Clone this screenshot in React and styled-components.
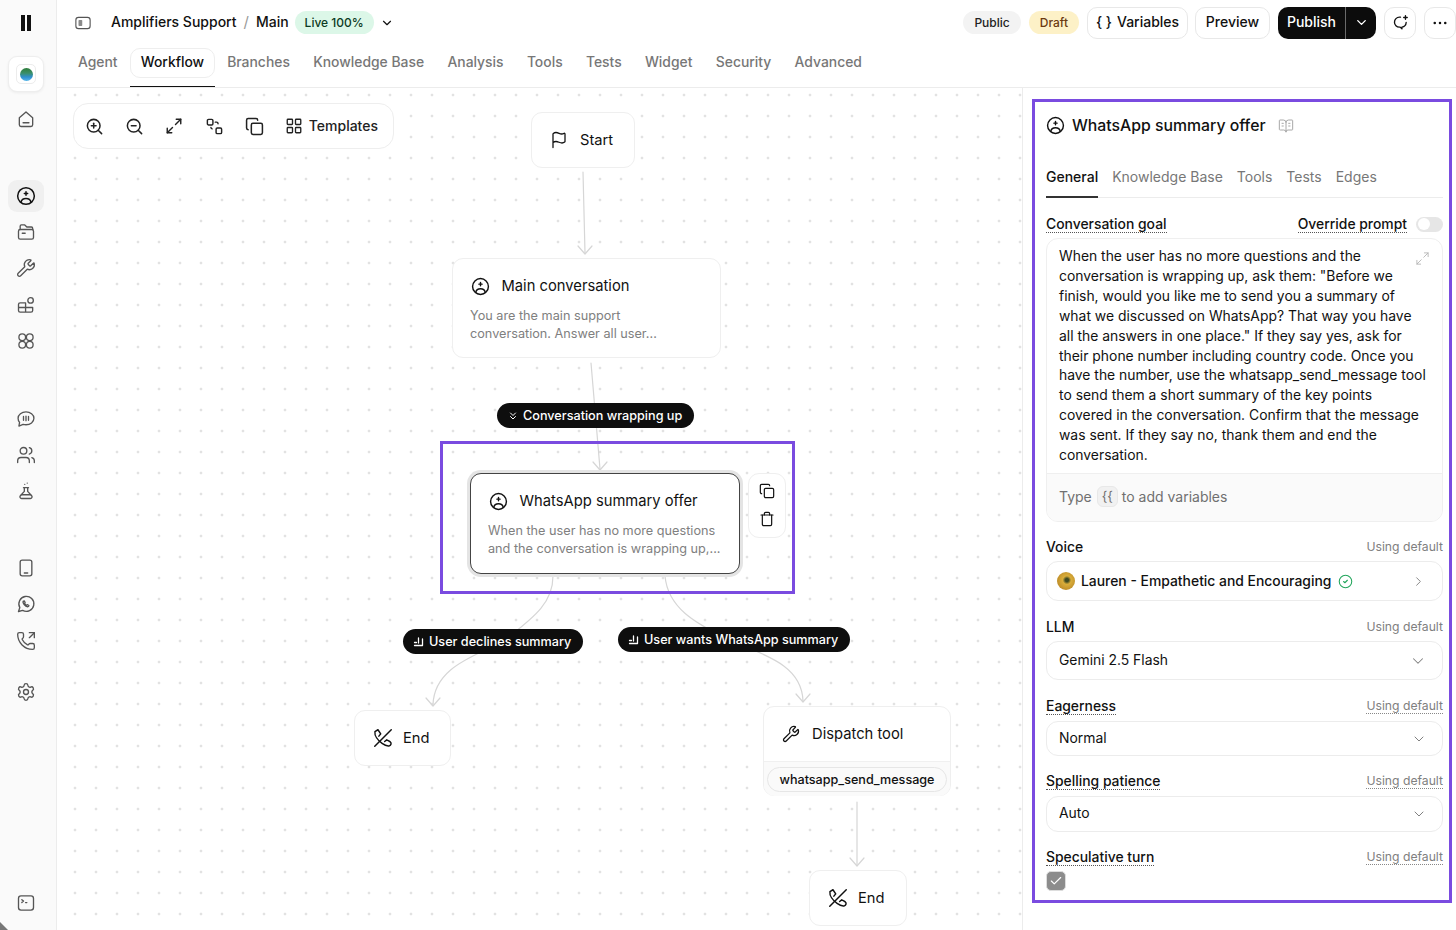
import React from 'react';
import styled, {createGlobalStyle} from 'styled-components';
import {
   ZoomIn, ZoomOut, Maximize2, Copy, LayoutGrid, Wrench, Flag, ChevronDown, ChevronRight, ChevronsDown,
   Settings, Users, PhoneOutgoing, Trash, BookOpenText, CircleCheck, Check
} from 'lucide-react';

const GlobalStyle = createGlobalStyle`
   html, body {
      margin: 0;
      padding: 0;
      background: #ffffff;
      overflow: hidden;
   }
   body {
      font-family: Inter, "Liberation Sans", sans-serif;
      color: #111111;
   }
`;

const Page = styled.div`
   display: flex;
   width: 1456px;
   height: 930px;
   overflow: hidden;
   position: relative;
`;

/* left rail */
const Rail = styled.nav`
   flex: 0 0 57px;
   box-sizing: border-box;
   background: #fafafa;
   border-right: 1px solid #ececec;
   display: flex;
   flex-direction: column;
   align-items: center;
   padding: 15px 4px 0 0;
`;

const Bars = styled.div`
   display: flex;
   gap: 1.5px;
   height: 16px;
   margin-bottom: 25px;
   span {
      width: 4.3px;
      background: #111111;
   }
`;

const LogoBox = styled.div`
   width: 36px;
   height: 36px;
   box-sizing: border-box;
   background: #ffffff;
   border: 1px solid #eeeeee;
   border-radius: 9px;
   box-shadow: 0 1px 3px rgba(0, 0, 0, 0.06);
   display: flex;
   align-items: center;
   justify-content: center;
`;

const LogoInner = styled.div`
   width: 20px;
   height: 20px;
   box-sizing: border-box;
   border: 1px solid #ececec;
   border-radius: 5px;
   display: flex;
   align-items: center;
   justify-content: center;
`;

const Orb = styled.div`
   width: 13px;
   height: 13px;
   border-radius: 50%;
   background: linear-gradient(180deg, #2f7d3a 0%, #3a8f6a 40%, #2f8fd0 70%, #57b6e8 100%);
`;

const RailGroup = styled.div`
   display: flex;
   flex-direction: column;
   gap: 4.2px;
   margin-top: ${p => p.$top}px;
`;

const RailItem = styled.div`
   width: 36px;
   height: 32px;
   border-radius: 9px;
   display: flex;
   align-items: center;
   justify-content: center;
   color: ${p => p.$active ? '#111111' : '#555555'};
   background: ${p => p.$active ? '#f0f0f0' : 'transparent'};
`;

const RailBottom = styled(RailGroup)`
   margin-top: auto;
   margin-bottom: 11px;
`;

const CornerMark = styled.svg`
   position: absolute;
   left: 0;
   bottom: 0;
`;

/* main column */
const Main = styled.div`
   flex: 1;
   min-width: 0;
   display: flex;
   flex-direction: column;
`;

const TopBar = styled.header`
   height: 45px;
   display: flex;
   align-items: center;
   padding-left: 17px;
   flex: none;
`;

const Crumb = styled.span`
   font-size: 14px;
   font-weight: 500;
   margin-left: ${p => p.$left || 0}px;
   margin-bottom: 2px;
`;

const CrumbSlash = styled.span`
   font-size: 15px;
   color: #9a9a9a;
   margin: 0 7px 2px 7px;
`;

const TopSpacer = styled.div`
   flex: 1;
`;

const Pill = styled.span`
   height: 23px;
   display: inline-flex;
   align-items: center;
   padding: 0 ${p => p.$pad || 11}px;
   border-radius: 12px;
   font-size: ${p => p.$size || 12}px;
   font-weight: 500;
   background: ${p => p.$bg};
   color: ${p => p.$fg};
   margin-left: ${p => p.$left || 0}px;
`;

const CaretBox = styled.span`
   display: flex;
   margin-left: 6px;
`;

const OutlineButton = styled.button`
   height: 32px;
   box-sizing: border-box;
   border: 1px solid #e8e8e8;
   border-radius: 10px;
   background: #ffffff;
   font-family: inherit;
   font-size: 14px;
   font-weight: 500;
   color: #111111;
   padding: 0 0 2px;
   margin-left: ${p => p.$left || 0}px;
   display: inline-flex;
   align-items: center;
   justify-content: center;
   white-space: nowrap;
   flex: none;
   width: ${p => p.$width}px;
`;

const IconButton = styled(OutlineButton)`
   padding: 0;
`;

const Braces = styled.span`
   margin-right: 5px;
`;

const PublishGroup = styled.div`
   display: flex;
   height: 32px;
   margin-left: 8px;
   border-radius: 10px;
   overflow: hidden;
   background: #0c0c0c;
   color: #ffffff;
   font-size: 14px;
   font-weight: 500;
   flex: none;
`;

const PublishLabel = styled.div`
   width: 68px;
   box-sizing: border-box;
   padding-bottom: 2px;
   display: flex;
   align-items: center;
   justify-content: center;
   border-right: 1px solid #6a6a6a;
`;

const PublishArrow = styled.div`
   width: 30px;
   display: flex;
   align-items: center;
   justify-content: center;
`;

const Tabs = styled.div`
   height: 43px;
   flex: none;
   box-sizing: border-box;
   display: flex;
   align-items: flex-start;
   gap: 23.3px;
   padding: 3px 0 0 21px;
   border-bottom: 1px solid #ececec;
`;

const Tab = styled.div`
   font-size: 13.9px;
   font-weight: 500;
   color: #777777;
   height: 30px;
   line-height: 29px;
`;

const ActiveTab = styled.div`
   position: relative;
   width: 85px;
   box-sizing: border-box;
   height: 30px;
   line-height: 27px;
   margin: 0 -11px 0 -11px;
   text-align: center;
   font-size: 13.9px;
   font-weight: 500;
   color: #111111;
   border: 1px solid #eeeeee;
   border-radius: 10px;
   &::after {
      content: "";
      position: absolute;
      left: -1px;
      right: -1px;
      bottom: -10px;
      height: 1.5px;
      background: #111111;
   }
`;

const Body = styled.div`
   flex: 1;
   min-height: 0;
   display: flex;
`;

/* flow canvas */
const Canvas = styled.section`
   position: relative;
   flex: 1;
   min-width: 0;
   background-color: #ffffff;
   background-image: radial-gradient(circle at center, #b8b8b8 0.8px, transparent 1.1px);
   background-size: 21px 21px;
   background-position: 7.5px -3.5px;
`;

const Edges = styled.svg`
   position: absolute;
   left: -57px;
   top: -88px;
   pointer-events: none;
`;

const Toolbar = styled.div`
   position: absolute;
   left: 16px;
   top: 15px;
   width: 321px;
   height: 46px;
   box-sizing: border-box;
   background: #ffffff;
   border: 1px solid #eeeeee;
   border-radius: 15px;
   display: flex;
   align-items: center;
   padding-left: 1px;
   color: #222222;
`;

const ToolIcon = styled.div`
   width: 39.8px;
   height: 40px;
   flex: none;
   display: flex;
   align-items: center;
   justify-content: center;
`;

const ToolLabel = styled.span`
   font-size: 14px;
   font-weight: 500;
   margin: 0 0 2px -5px;
`;

const Node = styled.div`
   position: absolute;
   left: ${p => p.$x}px;
   top: ${p => p.$y}px;
   width: ${p => p.$w}px;
   height: ${p => p.$h}px;
   box-sizing: border-box;
   background: #ffffff;
   border: 1px solid #efefef;
   border-radius: 11px;
`;

const SimpleNode = styled(Node)`
   display: flex;
   align-items: center;
   padding-left: ${p => p.$pad || 18}px;
   gap: ${p => p.$gap || 12}px;
   font-size: 14.7px;
`;

const CardNode = styled(Node)`
   padding: 17px 17px 0 17px;
`;

const SelectedNode = styled(CardNode)`
   border: 1.5px solid #444444;
   box-shadow: 0 0 0 3px #e4e4e4;
`;

const NodeTitle = styled.div`
   display: flex;
   align-items: center;
   gap: 11.5px;
   font-size: 14.75px;
   height: 20px;
   white-space: nowrap;
   padding-left: 1px;
`;

const Caption = styled.span`
   margin-bottom: 1px;
`;

const NodeText = styled.div`
   font-size: 12.7px;
   line-height: 17.5px;
   color: #808080;
   margin: 11px -8px 0 0;
   white-space: nowrap;
`;

const NodeActions = styled(Node)`
   display: flex;
   flex-direction: column;
   align-items: center;
   gap: 12px;
   padding-top: 9px;
`;

const ToolHead = styled.div`
   height: 54px;
   display: flex;
   align-items: center;
   gap: 12px;
   padding-left: 18px;
   font-size: 14.75px;
   border-bottom: 1px solid #f0f0f0;
`;

const ToolFoot = styled.div`
   height: 34px;
   box-sizing: border-box;
   padding: 5px 3px 0;
   background: #fafafa;
   border-radius: 0 0 11px 11px;
`;

const ToolChip = styled.div`
   height: 25px;
   box-sizing: border-box;
   border: 1px solid #e6e6e6;
   border-radius: 13px;
   background: #fafafa;
   text-align: center;
   font-size: 12.6px;
   font-weight: 500;
   line-height: 23px;
`;

const EdgeLabel = styled.div`
   position: absolute;
   left: ${p => p.$x}px;
   top: ${p => p.$y}px;
   height: 25px;
   box-sizing: border-box;
   display: flex;
   align-items: center;
   gap: 4px;
   padding: 0 11.5px 0 10px;
   border-radius: 13px;
   background: #0e0e0e;
   color: #ffffff;
   font-size: 12.65px;
   font-weight: 500;
   white-space: nowrap;
`;

const Highlight = styled.div`
   position: absolute;
   left: 383px;
   top: 353px;
   width: 355px;
   height: 153px;
   box-sizing: border-box;
   border: 3px solid #7a4be0;
   pointer-events: none;
`;

/* inspector */
const Inspector = styled.aside`
   flex: 0 0 434px;
   box-sizing: border-box;
   border-left: 1px solid #ececec;
   padding: 11px 4px 0 9px;
`;

const InspectorFrame = styled.div`
   height: 804px;
   box-sizing: border-box;
   border: 3px solid #7a4be0;
   padding: 0 6px 0 11px;
`;

const InspectorHead = styled.div`
   height: 47px;
   display: flex;
   align-items: center;
   gap: 7px;
   font-size: 15.8px;
   font-weight: 500;
`;

const HeadBook = styled.span`
   display: flex;
   color: #a8a8a8;
   margin-left: 5px;
`;

const SubTabs = styled.div`
   display: flex;
   gap: 14px;
   margin-top: 6px;
   height: 43px;
   box-sizing: border-box;
   border-bottom: 1px solid #ececec;
`;

const SubTab = styled.div`
   height: 43px;
   box-sizing: border-box;
   line-height: 44px;
   font-size: 14px;
   font-weight: ${p => p.$active ? 500 : 400};
   color: ${p => p.$active ? '#111111' : '#777777'};
   border-bottom: ${p => p.$active ? '2px solid #333333' : 'none'};
`;

const LabelRow = styled.div`
   display: flex;
   align-items: center;
   justify-content: space-between;
   height: 18px;
   margin-top: ${p => p.$top}px;
`;

const Label = styled.span`
   font-size: 13.9px;
   font-weight: 500;
   line-height: 16px;
   border-bottom: ${p => p.$dotted ? '1px dotted #555555' : '1px solid transparent'};
`;

const DefaultNote = styled.span`
   font-size: 12.2px;
   line-height: 15px;
   color: #808080;
   border-bottom: ${p => p.$dotted ? '1px dotted #888888' : '1px solid transparent'};
`;

const OverrideWrap = styled.div`
   display: flex;
   align-items: center;
   gap: 9px;
`;

const Toggle = styled.div`
   width: 27px;
   height: 15px;
   box-sizing: border-box;
   border-radius: 8px;
   background: #e6e6e6;
   padding: 1.5px;
   &::before {
      content: "";
      display: block;
      width: 12px;
      height: 12px;
      border-radius: 50%;
      background: #ffffff;
   }
`;

const PromptBox = styled.div`
   position: relative;
   margin-top: 5px;
   height: 284px;
   box-sizing: border-box;
   border: 1px solid #efefef;
   border-radius: 12px;
   overflow: hidden;
   display: flex;
   flex-direction: column;
`;

const PromptText = styled.div`
   flex: 1;
   box-sizing: border-box;
   padding: 8px 13px 0 12px;
   font-size: 13.9px;
   line-height: 19.9px;
`;

const PromptExpand = styled.span`
   position: absolute;
   top: 12px;
   right: 12px;
   display: flex;
   color: #b4b4b4;
`;

const PromptFoot = styled.div`
   height: 48px;
   flex: none;
   box-sizing: border-box;
   background: #fafafa;
   border-top: 1px solid #efefef;
   display: flex;
   align-items: center;
   padding: 0 0 3px 12px;
   font-size: 14px;
   color: #707070;
`;

const KeyCap = styled.span`
   height: 21px;
   width: 21px;
   margin: 0 4px 0 5px;
   box-sizing: border-box;
   background: #f1f1f1;
   border: 1px solid #e8e8e8;
   border-radius: 6px;
   display: inline-flex;
   align-items: center;
   justify-content: center;
   font-size: 13px;
`;

const Selector = styled.div`
   margin-top: ${p => p.$top || 6}px;
   height: ${p => p.$h}px;
   box-sizing: border-box;
   border: 1px solid #ececec;
   border-radius: 12px;
   display: flex;
   align-items: center;
   justify-content: space-between;
   padding: 0 ${p => p.$right || 14}px 0 ${p => p.$left || 12}px;
   font-size: 13.9px;
   color: #111111;
`;

const SelectorValue = styled.span`
   display: flex;
   align-items: center;
   gap: 6px;
   font-weight: ${p => p.$medium ? 500 : 400};
   margin-bottom: ${p => p.$medium ? 0 : 2}px;
`;

const SelectorIcon = styled.span`
   display: flex;
   color: #808080;
`;

const VoiceAvatar = styled.span`
   width: 18px;
   height: 18px;
   border-radius: 50%;
   background: radial-gradient(circle at 55% 45%, #3f4a22 0 12%, #d9ad3a 30%, #c08f2a 70%, #8f6a22 100%);
`;

const VoiceCheck = styled.span`
   display: flex;
   color: #22a55b;
   margin-left: 1px;
`;

const CheckBox = styled.div`
   width: 20px;
   height: 20px;
   margin-top: 5px;
   border-radius: 5px;
   background: #8c8c8c;
   border: 1px solid #dddddd;
   box-sizing: border-box;
   color: #ffffff;
   display: flex;
   align-items: center;
   justify-content: center;
`;

/* icons the packages have no close match for */
const Svg = ({size = 20, sw = 1.6, children}) => (
   <svg width={size} height={size} viewBox="0 0 24 24" fill="none" stroke="currentColor" strokeWidth={sw}
        strokeLinecap="round" strokeLinejoin="round">
      {children}
   </svg>
);

const AgentIcon = ({size = 19, sw = 1.8}) => (
   <Svg size={size} sw={sw}>
      <circle cx="12" cy="12" r="10"/>
      <path d="M6 19.500c.6-3 3-4.600 6-4.600s5.400 1.600 6 4.600"/>
      <path d="M12 7v4M10 9h4"/>
   </Svg>
);

const HomeIcon = () => (
   <Svg>
      <path d="M4 10.500 12 3.500l8 7V19a2 2 0 0 1-2 2H6a2 2 0 0 1-2-2z"/>
      <path d="M8.500 16.500h7"/>
   </Svg>
);

const FolderIcon = () => (
   <Svg>
      <path d="M5 9V5a1.500 1.500 0 0 1 1.500-1.500h4L13 6h5.500A1.500 1.500 0 0 1 20 7.500V9"/>
      <rect x="3" y="9" width="18" height="11.500" rx="2"/>
      <path d="M7.500 13.500h3.500"/>
   </Svg>
);

const WidgetIcon = () => (
   <Svg>
      <path d="M11.500 9.500H5a2 2 0 0 0-2 2v7a2 2 0 0 0 2 2h13a2 2 0 0 0 2-2V15h-8.500zM3 15h8.500v5.500"/>
      <circle cx="17.500" cy="6.500" r="3.300"/>
   </Svg>
);

const CirclesIcon = () => (
   <Svg>
      <circle cx="7.500" cy="7.500" r="4"/>
      <circle cx="16.500" cy="7.500" r="4"/>
      <circle cx="7.500" cy="16.500" r="4"/>
      <circle cx="16.500" cy="16.500" r="4"/>
   </Svg>
);

const ChatBarsIcon = () => (
   <Svg>
      <path d="M12 3.500c5.200 0 9.500 3.300 9.500 7.700s-4.300 7.700-9.500 7.700c-1.200 0-2.400-.2-3.500-.5L3.500 20.500l.8-4.400A7.200 7.200 0 0 1 2.500 11.200C2.500 6.800 6.800 3.500 12 3.500z"/>
      <path d="M9 9v4.500M12 8.500v5.500M15 9v4.500"/>
   </Svg>
);

const FlaskIcon = () => (
   <Svg>
      <path d="M9 8h6M10 8v4.500l-4.800 5.200A2 2 0 0 0 6.700 21h10.600a2 2 0 0 0 1.500-3.300L14 12.500V8"/>
      <path d="M6.500 16.500h11"/>
      <path d="M10.500 4h.01M13.500 2.500h.01"/>
   </Svg>
);

const MobileIcon = () => (
   <Svg>
      <rect x="5" y="2.500" width="14" height="19" rx="2.500"/>
      <path d="M10 18h4"/>
   </Svg>
);

const WhatsappIcon = () => (
   <Svg>
      <path d="M3 21l1.600-4.700A9 9 0 1 1 8 19.700z"/>
      <path d="M9 8.500c-.8.800-.6 2.400.8 4.200s3 2.700 4.200 2.600c1-.1 1.500-.8 1.500-1.500l-2-1-.9.800c-1-.4-1.900-1.400-2.300-2.400l.7-.8-.9-2z"/>
   </Svg>
);

const TerminalIcon = () => (
   <Svg>
      <rect x="3" y="3.500" width="18" height="17" rx="3"/>
      <path d="M7 8l2 1.700L7 11.500M11.500 11.500h1.500"/>
   </Svg>
);

const PanelIcon = () => (
   <svg width="18" height="18" viewBox="0 0 24 24" fill="none" stroke="#555555" strokeWidth="1.500">
      <rect x="2.500" y="4.500" width="19" height="15" rx="3.500"/>
      <rect x="6" y="8" width="5" height="8" rx="1" fill="#8a8a8a" stroke="none"/>
   </svg>
);

const ChatSparkIcon = () => (
   <Svg size={17} sw={1.9}>
      <path d="M12 4.500H10.500A7 7 0 0 0 10.500 18.500H11.500L14 21V18.500A7 7 0 0 0 20 12"/>
      <path d="M19 2.500v5M16.500 5h5"/>
   </Svg>
);

const NodesIcon = () => (
   <Svg size={19} sw={1.8}>
      <rect x="3" y="3" width="7" height="7" rx="1.500"/>
      <rect x="14" y="14" width="7" height="7" rx="1.500"/>
      <path d="M13 6.500h1.500a2 2 0 0 1 2 2M9 15a2 2 0 0 1-1.500-1.800"/>
   </Svg>
);

const EndIcon = () => (
   <Svg size={22} sw={1.6}>
      <path d="M21 3 3 21"/>
      <path d="M6.500 3 3.200 5c-.6 4 2.800 9.300 7.800 12.800 2.500 1.800 5.500 3.400 8 2.700 1.700-.6 2.300-2.600 1.300-3.800-1-1.300-3-2-4.200-2.700l-2.300 1.800M6.500 3l3 4.500-2 2.500"/>
   </Svg>
);

const BranchIcon = () => (
   <svg width="12" height="12" viewBox="0 0 12 12" fill="none" stroke="currentColor" strokeWidth="1.300" strokeLinecap="round" strokeLinejoin="round">
      <path d="M1.500 9.500h8V3M5.500 2v5M1.500 6.500h2"/>
   </svg>
);

const Arrow = ({x, y}) => <path d={`M${x - 7} ${y - 8}L${x} ${y}L${x + 7} ${y - 8}`}/>;

const PROMPT = 'When the user has no more questions and the conversation is wrapping up, ask them: "Before we finish, would you like me to send you a summary of what we discussed on WhatsApp? That way you have all the answers in one place." If they say yes, ask for their phone number including country code. Once you have the number, use the whatsapp_send_message tool to send them a short summary of the key points covered in the conversation. Confirm that the message was sent. If they say no, thank them and end the conversation.';

const PAGE_TABS_AFTER = ['Branches', 'Knowledge Base', 'Analysis', 'Tools', 'Tests', 'Widget', 'Security', 'Advanced'];
const PANEL_TABS = ['Knowledge Base', 'Tools', 'Tests', 'Edges'];

const SELECTS = [
   {label: 'Eagerness', value: 'Normal', top: 17, height: 35},
   {label: 'Spelling patience', value: 'Auto', top: 16, height: 36},
];

const render_rail = () => (
   <Rail>
      <Bars><span/><span/></Bars>
      <LogoBox><LogoInner><Orb/></LogoInner></LogoBox>
      <RailGroup $top={11}>
         <RailItem><HomeIcon/></RailItem>
      </RailGroup>
      <RailGroup $top={45}>
         <RailItem $active><AgentIcon size={20}/></RailItem>
         <RailItem><FolderIcon/></RailItem>
         <RailItem><Wrench size={20} strokeWidth={1.6}/></RailItem>
         <RailItem><WidgetIcon/></RailItem>
         <RailItem><CirclesIcon/></RailItem>
      </RailGroup>
      <RailGroup $top={46}>
         <RailItem><ChatBarsIcon/></RailItem>
         <RailItem><Users size={20} strokeWidth={1.6}/></RailItem>
         <RailItem><FlaskIcon/></RailItem>
      </RailGroup>
      <RailGroup $top={45}>
         <RailItem><MobileIcon/></RailItem>
         <RailItem><WhatsappIcon/></RailItem>
         <RailItem><PhoneOutgoing size={20} strokeWidth={1.6}/></RailItem>
      </RailGroup>
      <RailGroup $top={19}>
         <RailItem><Settings size={20} strokeWidth={1.6}/></RailItem>
      </RailGroup>
      <RailBottom>
         <RailItem><TerminalIcon/></RailItem>
      </RailBottom>
   </Rail>
);

const render_top_bar = () => (
   <TopBar>
      <PanelIcon/>
      <Crumb $left={19}>Amplifiers Support</Crumb>
      <CrumbSlash>/</CrumbSlash>
      <Crumb>Main</Crumb>
      <Pill $bg="#dcf7e8" $fg="#0d3b24" $left={6} $pad={10}>Live 100%</Pill>
      <CaretBox><ChevronDown size={14} strokeWidth={2}/></CaretBox>
      <TopSpacer/>
      <Pill $bg="#f3f3f3" $fg="#222222">Public</Pill>
      <Pill $bg="#fdf1c7" $fg="#6b3a10" $left={8}>Draft</Pill>
      <OutlineButton $left={8} $width={101}><Braces>{'{ }'}</Braces>Variables</OutlineButton>
      <OutlineButton $left={7} $width={75}>Preview</OutlineButton>
      <PublishGroup>
         <PublishLabel>Publish</PublishLabel>
         <PublishArrow><ChevronDown size={15} strokeWidth={2.2}/></PublishArrow>
      </PublishGroup>
      <IconButton $left={8} $width={32}><ChatSparkIcon/></IconButton>
      <IconButton $left={8} $width={32}>
         <Svg size={18} sw={3.400}><path d="M5 12h.01M12 12h.01M19 12h.01"/></Svg>
      </IconButton>
   </TopBar>
);

const render_canvas = () => (
   <Canvas>
      <Edges width="1456" height="930" fill="none" stroke="#d6d6d6" strokeWidth="1.200" strokeLinecap="round" strokeLinejoin="round">
         <path d="M583 172 585 253"/>
         <Arrow x={585} y={254}/>
         <path d="M591 363 600 469"/>
         <Arrow x={600} y={470}/>
         <path d="M553 576C553 605 530 620 505 640C480 655 434 665 433 705"/>
         <Arrow x={433} y={706}/>
         <path d="M665 576C668 610 700 625 725 638C765 655 802 665 803 701"/>
         <Arrow x={803} y={702}/>
         <path d="M857 802V865"/>
         <Arrow x={857} y={866}/>
      </Edges>

      <Toolbar>
         <ToolIcon><ZoomIn size={19} strokeWidth={1.9}/></ToolIcon>
         <ToolIcon><ZoomOut size={19} strokeWidth={1.9}/></ToolIcon>
         <ToolIcon><Maximize2 size={18} strokeWidth={1.9}/></ToolIcon>
         <ToolIcon><NodesIcon/></ToolIcon>
         <ToolIcon><Copy size={19} strokeWidth={1.9}/></ToolIcon>
         <ToolIcon><LayoutGrid size={18} strokeWidth={1.8}/></ToolIcon>
         <ToolLabel>Templates</ToolLabel>
      </Toolbar>

      <SimpleNode $x={474} $y={24} $w={104} $h={56}>
         <Flag size={18} strokeWidth={1.7}/><Caption>Start</Caption>
      </SimpleNode>

      <CardNode $x={395} $y={170} $w={269} $h={100}>
         <NodeTitle><AgentIcon/><Caption>Main conversation</Caption></NodeTitle>
         <NodeText>You are the main support<br/>conversation. Answer all user...</NodeText>
      </CardNode>

      <EdgeLabel $x={440} $y={315}><ChevronsDown size={12} strokeWidth={2}/>Conversation wrapping up</EdgeLabel>

      <SelectedNode $x={413} $y={385} $w={270} $h={101}>
         <NodeTitle><AgentIcon/><Caption>WhatsApp summary offer</Caption></NodeTitle>
         <NodeText>When the user has no more questions<br/>and the conversation is wrapping up,...</NodeText>
      </SelectedNode>

      <NodeActions $x={691} $y={385} $w={38} $h={65}>
         <Copy size={16} strokeWidth={1.8}/>
         <Trash size={16} strokeWidth={1.8}/>
      </NodeActions>

      <Highlight/>

      <EdgeLabel $x={346} $y={541}><BranchIcon/>User declines summary</EdgeLabel>
      <EdgeLabel $x={561} $y={539}><BranchIcon/>User wants WhatsApp summary</EdgeLabel>

      <SimpleNode $x={297} $y={622} $w={97} $h={56} $pad={17} $gap={9}><EndIcon/><Caption>End</Caption></SimpleNode>

      <Node $x={706} $y={618} $w={188} $h={90}>
         <ToolHead><Wrench size={18} strokeWidth={1.7}/><Caption>Dispatch tool</Caption></ToolHead>
         <ToolFoot><ToolChip>whatsapp_send_message</ToolChip></ToolFoot>
      </Node>

      <SimpleNode $x={752} $y={782} $w={98} $h={56} $pad={17} $gap={9}><EndIcon/><Caption>End</Caption></SimpleNode>
   </Canvas>
);

const render_inspector = () => (
   <Inspector>
      <InspectorFrame>
         <InspectorHead>
            <AgentIcon/>
            WhatsApp summary offer
            <HeadBook><BookOpenText size={16} strokeWidth={1.5}/></HeadBook>
         </InspectorHead>

         <SubTabs>
            <SubTab $active>General</SubTab>
            {PANEL_TABS.map(name => <SubTab key={name}>{name}</SubTab>)}
         </SubTabs>

         <LabelRow $top={17}>
            <Label $dotted>Conversation goal</Label>
            <OverrideWrap>
               <Label $dotted>Override prompt</Label>
               <Toggle/>
            </OverrideWrap>
         </LabelRow>
         <PromptBox>
            <PromptText>{PROMPT}</PromptText>
            <PromptExpand><Maximize2 size={15} strokeWidth={1.4}/></PromptExpand>
            <PromptFoot>Type <KeyCap>{'{{'}</KeyCap> to add variables</PromptFoot>
         </PromptBox>

         <LabelRow $top={16}>
            <Label>Voice</Label>
            <DefaultNote>Using default</DefaultNote>
         </LabelRow>
         <Selector $top={5} $h={40} $left={10} $right={16}>
            <SelectorValue $medium>
               <VoiceAvatar/>
               Lauren - Empathetic and Encouraging
               <VoiceCheck><CircleCheck size={15} strokeWidth={1.7}/></VoiceCheck>
            </SelectorValue>
            <SelectorIcon><ChevronRight size={15} strokeWidth={1.5}/></SelectorIcon>
         </Selector>

         <LabelRow $top={17}>
            <Label>LLM</Label>
            <DefaultNote>Using default</DefaultNote>
         </LabelRow>
         <Selector $top={5} $h={39} $right={15}>
            <SelectorValue>Gemini 2.5 Flash</SelectorValue>
            <SelectorIcon><ChevronDown size={18} strokeWidth={1.4}/></SelectorIcon>
         </Selector>

         {SELECTS.map(item => (
            <React.Fragment key={item.label}>
               <LabelRow $top={item.top}>
                  <Label $dotted>{item.label}</Label>
                  <DefaultNote $dotted>Using default</DefaultNote>
               </LabelRow>
               <Selector $h={item.height} $right={15}>
                  <SelectorValue>{item.value}</SelectorValue>
                  <SelectorIcon><ChevronDown size={16} strokeWidth={1.5}/></SelectorIcon>
               </Selector>
            </React.Fragment>
         ))}

         <LabelRow $top={16}>
            <Label $dotted>Speculative turn</Label>
            <DefaultNote $dotted>Using default</DefaultNote>
         </LabelRow>
         <CheckBox><Check size={14} strokeWidth={2}/></CheckBox>
      </InspectorFrame>
   </Inspector>
);

export default function App() {
   return (
      <Page>
         <GlobalStyle/>
         {render_rail()}
         <Main>
            {render_top_bar()}
            <Tabs>
               <Tab>Agent</Tab>
               <ActiveTab>Workflow</ActiveTab>
               {PAGE_TABS_AFTER.map(name => <Tab key={name}>{name}</Tab>)}
            </Tabs>
            <Body>
               {render_canvas()}
               {render_inspector()}
            </Body>
         </Main>
         <CornerMark width="8" height="8" viewBox="0 0 8 8">
            <path d="M0 0 8 8H0z" fill="#777777"/>
         </CornerMark>
      </Page>
   );
}
